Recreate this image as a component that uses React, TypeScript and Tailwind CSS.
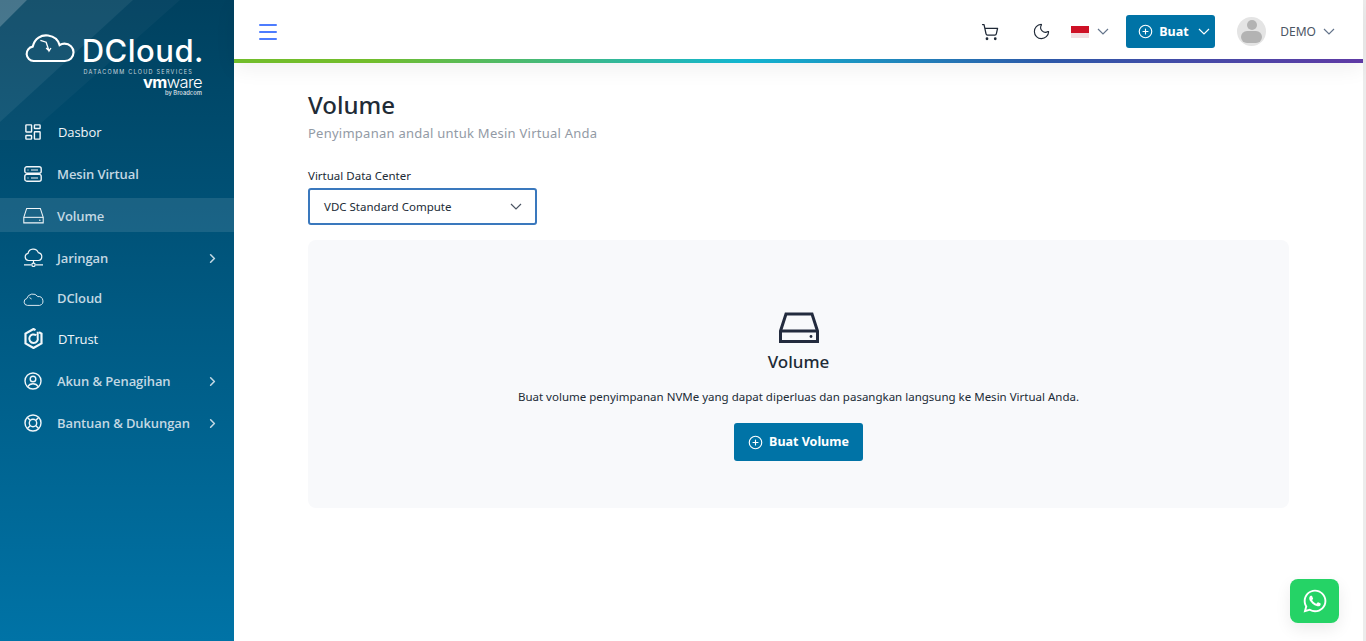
import React from "react";
import { ChevronRight, CirclePlus, Menu, Moon, ShoppingCart } from "lucide-react";
import { FaWhatsapp } from "react-icons/fa";

const Caret = ({ className }: { className?: string }) => (
  <svg width="12" height="7" viewBox="0 0 12 7" fill="none" stroke="currentColor" strokeWidth="1.2" className={className}>
    <path d="M1 1l5 5 5-5" />
  </svg>
);

const DashIcon = () => (
  <svg width="16" height="16" viewBox="0 0 18 18" fill="none" stroke="currentColor" strokeWidth="1.6">
    <rect x="1" y="1" width="6.400" height="8" rx="0.6" />
    <rect x="10.600" y="1" width="6.400" height="4" rx="0.6" />
    <rect x="1" y="13" width="6.400" height="4" rx="0.6" />
    <rect x="10.600" y="8.800" width="6.400" height="8.200" rx="0.6" />
  </svg>
);

const ServerIcon = () => (
  <svg width="18" height="16" viewBox="0 0 18 16" fill="none" stroke="currentColor" strokeWidth="1.4">
    <rect x="0.8" y="0.8" width="16.4" height="6.4" rx="2" />
    <rect x="0.8" y="8.4" width="16.4" height="6.8" rx="2" />
    <path d="M3.5 4h1M3.5 12h1M7 4h7M7 12h7" strokeWidth="1" />
  </svg>
);

const DriveIcon = ({ w, h, sw }: { w: number; h: number; sw: number }) => (
  <svg width={w} height={h} viewBox="0 0 40 31" fill="none" stroke="currentColor" strokeWidth={sw}>
    <path d="M1.5 19 L7 2 H33 L38.5 19 V29.5 H1.5 Z" />
    <path d="M1.5 19 H38.5" />
    <circle cx="32" cy="24.5" r="1.4" fill="currentColor" stroke="none" />
  </svg>
);

const NetworkIcon = () => (
  <svg width="21" height="19" viewBox="0 0 21 19" fill="none" stroke="currentColor" strokeWidth="1.2" className="-mt-[1px]">
    <path d="M5.500 12.500a3.600 3.600 0 0 1-.5-7.100A5.400 5.400 0 0 1 15.300 4.600a4 4 0 0 1 .2 7.900H5.500Z" />
    <path d="M10.500 12.500v2.800M1 16.800h7.200M12.800 16.800H20" />
    <circle cx="10.500" cy="16.800" r="1.700" />
  </svg>
);

const CloudIcon = () => (
  <svg width="21" height="13" viewBox="0 0 21 13" fill="none" stroke="currentColor" strokeWidth="0.9" className="mt-[3px]">
    <path d="M4.500 12.400a3.500 3.500 0 0 1-.7-6.900A6.200 6.200 0 0 1 14.800 3.600a4.500 4.500 0 0 1 1.800 8.800H4.500Z" />
    <path d="M6.500 4.600 8.600 6" />
  </svg>
);

const TrustIcon = () => (
  <svg width="19" height="21" viewBox="0 0 19 21" fill="none" stroke="currentColor">
    <path d="M11.500 2.100 9.500 1 1.500 5.600v9.800l8 4.600 8-4.600V5.600L15 4.200" strokeWidth="2.200" />
    <path d="M12.200 7.300a4.300 4.300 0 1 0 1.500 2.200V3.800" strokeWidth="2" />
  </svg>
);

const AccountIcon = () => (
  <svg width="18" height="18" viewBox="0 0 18 18" fill="none" stroke="currentColor" strokeWidth="1.4">
    <circle cx="9" cy="9" r="8" />
    <circle cx="9" cy="7" r="2.8" />
    <path d="M3.800 14.800c1-2 2.800-3 5.200-3s4.200 1 5.200 3" />
  </svg>
);

const HelpIcon = () => (
  <svg width="18" height="18" viewBox="0 0 18 18" fill="none" stroke="currentColor" strokeWidth="1.4">
    <circle cx="9" cy="9" r="8" />
    <circle cx="9" cy="9" r="3.700" />
    <path d="m3.400 3.400 3 3M14.600 3.400l-3 3M3.400 14.600l3-3M14.600 14.600l-3-3" />
  </svg>
);

const menu = [
  { label: "Dasbor", icon: <DashIcon />, h: "h-[42px]", text: "pt-[2px] text-[#f1f6f9] font-normal pl-px" },
  { label: "Mesin Virtual", icon: <ServerIcon />, h: "h-[42px]" },
  { label: "Volume", icon: <DriveIcon w={21} h={17} sw={2} />, h: "h-[34px] mt-[3px] mb-[5px] bg-white/10", text: "pt-[4px] font-semibold text-[#c3d8e3]" },
  { label: "Jaringan", icon: <NetworkIcon />, h: "h-[42px]", more: true },
  { label: "DCloud", icon: <CloudIcon />, h: "h-[38px]" },
  { label: "DTrust", icon: <TrustIcon />, h: "h-[43px]", text: "pt-[2px] text-[#f1f6f9] font-normal pl-px" },
  { label: "Akun & Penagihan", icon: <AccountIcon />, h: "h-[42px]", more: true },
  { label: "Bantuan & Dukungan", icon: <HelpIcon />, h: "h-[42px]", more: true },
];

const Sidebar = () => (
  <aside className="relative h-[641px] w-[234px] shrink-0 overflow-hidden bg-gradient-to-b from-[#00415f] via-[#005a83] to-[#0073a6]">
    <svg className="absolute left-0 top-0" width="234" height="140" viewBox="0 0 234 140" fill="none">
      <polygon points="0,0 27,0 0,27" fill="#ffffff" fillOpacity="0.28" />
      <polygon points="27,0 133,0 0,122 0,27" fill="#ffffff" fillOpacity="0.09" />
      <polygon points="133,0 0,122 0,140 22,140 180,0" fill="#ffffff" fillOpacity="0.03" />
    </svg>
    <div className="relative flex h-[111px] flex-col items-end pr-[32px] pt-[30px] text-white">
      <div className="-mr-[2px] flex h-[36px] items-center">
        <svg width="50" height="30" viewBox="0 0 52 30" fill="none" stroke="#ffffff" strokeWidth="2.200" className="mr-[7px]">
          <path d="M9 28.500a7.500 7.500 0 0 1-1-14.900C10 5 17 1 24 2c6 .8 10.500 4.500 12 10 1.500-1 3-1.500 5-1.500 5.500 0 9.500 4 9.500 9s-4 9-9 9H9Z" />
          <path d="m16 7 6 2 3 9 2-3M25 18l-3-3" strokeWidth="1.400" />
        </svg>
        <span className="mt-[5px] font-['Inter',sans-serif] text-[31px] font-medium leading-none tracking-[0.5px]">DCloud.</span>
      </div>
      <span className="mr-[9px] mt-[3px] font-['Inter',sans-serif] text-[5.500px] leading-[7px] tracking-[1.25px] text-[#c6d6de]">
        DATACOMM CLOUD SERVICES
      </span>
      <span className="font-['Inter',sans-serif] text-[16.500px] font-light leading-[13px] tracking-[-0.6px]">
        <span className="font-bold">vm</span>ware
      </span>
      <span className="font-['Inter',sans-serif] text-[5.800px] font-semibold leading-[7px] text-[#c6d6de]">by Broadcom</span>
    </div>
    <nav className="relative flex flex-col font-['Open_Sans',sans-serif] text-[13px]">
      {menu.map((item) => (
        <div key={item.label} className={`flex items-center pl-[22px] pr-[14px] ${item.h}`}>
          <div className="flex w-[22px] shrink-0 justify-center text-[#f1f6f9]">{item.icon}</div>
          <span className={`ml-[13px] flex-1 tracking-[-0.1px] ${item.text ?? "pt-[2px] font-semibold text-[#c3d8e3]"}`}>
            {item.label}
          </span>
          {item.more && <ChevronRight size={15} className="text-[#c3d8e3]" strokeWidth={2.5} />}
        </div>
      ))}
    </nav>
  </aside>
);

const Header = () => (
  <header className="relative flex h-[63px] shrink-0 flex-col bg-white shadow-[0_6px_20px_rgba(0,0,0,0.06)]">
    <div className="flex h-[59px] items-center pl-[22px] pr-[28px] pt-[4px]">
      <Menu size={24} className="text-[#4d7cfe]" strokeWidth={2} />
      <div className="ml-auto flex items-center">
        <ShoppingCart size={18} className="text-[#1f2937]" strokeWidth={1.7} />
        <Moon size={19} className="ml-[33px] text-[#1f2937]" strokeWidth={1.4} />
        <div className="ml-[20px] flex h-[12px] w-[18px] flex-col">
          <div className="h-[7px] bg-[#ce1126]" />
          <div className="h-[5px] bg-[#f2dfe2]" />
        </div>
        <Caret className="ml-[8px] text-[#64748b]" />
        <button className="ml-[17px] flex h-[33px] w-[89px] items-center rounded-[3px] bg-[#0073a6] pl-[12px] font-['Noto_Sans',sans-serif] text-[12.500px] font-bold text-white">
          <CirclePlus size={15} strokeWidth={1.8} />
          <span className="ml-[6px] pt-px">Buat</span>
          <Caret className="ml-[9px]" />
        </button>
        <div className="relative ml-[22px] h-[29px] w-[29px] overflow-hidden rounded-full bg-[#e4e4e4]">
          <div className="absolute left-[9.500px] top-[3px] h-[10px] w-[10px] rounded-full bg-[#b3b3b3]" />
          <div className="absolute left-[4px] top-[14px] h-[12px] w-[21px] rounded-[7px] bg-[#b3b3b3]" />
        </div>
        <span className="ml-[14px] font-['Noto_Sans',sans-serif] text-[12px] text-[#4b5563]">DEMO</span>
        <Caret className="ml-[7px] text-[#64748b]" />
      </div>
    </div>
    <div className="h-[4px] bg-[linear-gradient(90deg,#72bd2b_0%,#72bd2b_12%,#12b5d0_45%,#2d58a8_72%,#5f3aa5_100%)]" />
  </header>
);

const Content = () => (
  <main className="flex-1 pl-[74px] pr-[74px] pt-[26px] font-['Noto_Sans',sans-serif]">
    <h1 className="text-[24px] font-medium leading-[32px] text-[#212b36]">Volume</h1>
    <p className="mt-[2px] text-[13px] leading-[20px] tracking-[0.25px] text-[#929aa5]">
      Penyimpanan andal untuk Mesin Virtual Anda
    </p>
    <label className="mt-[25px] block text-[11.500px] leading-[16px] text-[#212b36]">Virtual Data Center</label>
    <div className="mt-[4px] flex h-[37px] w-[229px] items-center rounded-[3px] border-2 border-[#3a78bd] bg-white pl-[14px] pr-[13px] text-[11.500px] text-[#212b36]">
      <span className="flex-1">VDC Standard Compute</span>
      <Caret className="text-[#4b5563]" />
    </div>
    <section className="mt-[15px] flex h-[268px] w-[981px] flex-col items-center rounded-[8px] bg-[#f8f9fb] pt-[72px] text-[#212b36]">
      <div className="text-[#232b3e]">
        <DriveIcon w={40} h={31} sw={3} />
      </div>
      <h2 className="mt-[7px] text-[17px] font-medium leading-[24px]">Volume</h2>
      <p className="mt-[14px] text-[11.500px] leading-[18px]">
        Buat volume penyimpanan NVMe yang dapat diperluas dan pasangkan langsung ke Mesin Virtual Anda.
      </p>
      <button className="mt-[17px] flex h-[38px] w-[129px] items-center justify-center rounded-[3px] bg-[#0073a6] text-[12.500px] font-bold text-white">
        <CirclePlus size={15} strokeWidth={1.8} />
        <span className="ml-[6px] pt-px">Buat Volume</span>
      </button>
    </section>
  </main>
);

export default function App() {
  return (
    <div className="relative flex h-[641px] w-[1366px] overflow-hidden bg-white">
      <Sidebar />
      <div className="flex w-[1129px] flex-col">
        <Header />
        <Content />
      </div>
      <div className="w-[3px] bg-[#ececec]" />
      <button className="absolute left-[1290px] top-[579px] flex h-[44px] w-[49px] items-center justify-center rounded-[8px] bg-[#25d366] text-white shadow-[0_6px_16px_rgba(0,0,0,0.08)]">
        <FaWhatsapp size={26} />
      </button>
    </div>
  );
}
